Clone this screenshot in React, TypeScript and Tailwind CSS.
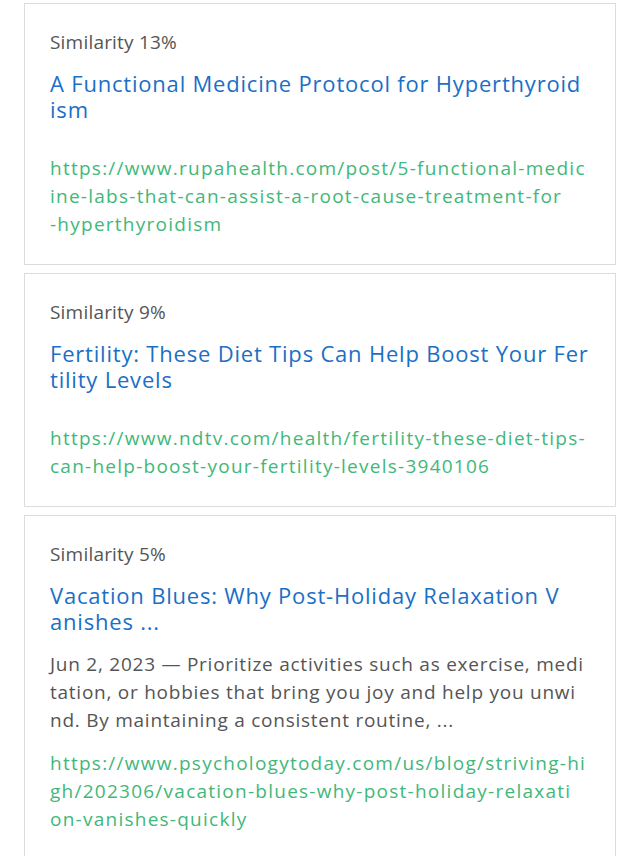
import React from "react";

type Card = {
  sim: string;
  title: string[];
  body?: string[];
  url: string[];
  gapUrl: string;
};

const cards: Card[] = [
  {
    sim: "Similarity 13%",
    title: ["A Functional Medicine Protocol for Hyperthyroid", "ism"],
    url: [
      "https://www.rupahealth.com/post/5-functional-medic",
      "ine-labs-that-can-assist-a-root-cause-treatment-for",
      "-hyperthyroidism",
    ],
    gapUrl: "mt-[32px]",
  },
  {
    sim: "Similarity 9%",
    title: ["Fertility: These Diet Tips Can Help Boost Your Fer", "tility Levels"],
    url: [
      "https://www.ndtv.com/health/fertility-these-diet-tips-",
      "can-help-boost-your-fertility-levels-3940106",
    ],
    gapUrl: "mt-[32px]",
  },
  {
    sim: "Similarity 5%",
    title: ["Vacation Blues: Why Post-Holiday Relaxation V", "anishes ..."],
    body: [
      "Jun 2, 2023 \u2014 Prioritize activities such as exercise, medi",
      "tation, or hobbies that bring you joy and help you unwi",
      "nd. By maintaining a consistent routine, ...",
    ],
    url: [
      "https://www.psychologytoday.com/us/blog/striving-hi",
      "gh/202306/vacation-blues-why-post-holiday-relaxati",
      "on-vanishes-quickly",
    ],
    gapUrl: "mt-[15px]",
  },
];

export default function App() {
  return (
    <div
      className="w-[640px] h-[856px] overflow-hidden bg-white flex flex-col gap-[8px] pt-[3px] px-[24px]"
      style={{ fontFamily: '"Open Sans", "Noto Sans", sans-serif' }}
    >
      {cards.map((c, i) => (
        <div key={i} className="border border-[#dcdcdc] pt-[24px] pb-[26px] px-[25px] shrink-0">
          <div className="text-[19px] leading-[28px] text-[#555555] tracking-[0.2px] whitespace-nowrap">{c.sim}</div>
          <div className="mt-[14px] text-[22px] leading-[26px] text-[#1a6fc6] tracking-[0.8px] whitespace-nowrap">
            {c.title.map((l, j) => (
              <div key={j}>{l}</div>
            ))}
          </div>
          {c.body && (
            <div className="mt-[16px] text-[19px] leading-[28px] text-[#555555] tracking-[0.75px] whitespace-nowrap">
              {c.body.map((l, j) => (
                <div key={j}>{l}</div>
              ))}
            </div>
          )}
          <div className={`${c.gapUrl} text-[19px] leading-[28px] text-[#3fb87a] tracking-[1.25px] whitespace-nowrap`}>
            {c.url.map((l, j) => (
              <div key={j}>{l}</div>
            ))}
          </div>
        </div>
      ))}
    </div>
  );
}
